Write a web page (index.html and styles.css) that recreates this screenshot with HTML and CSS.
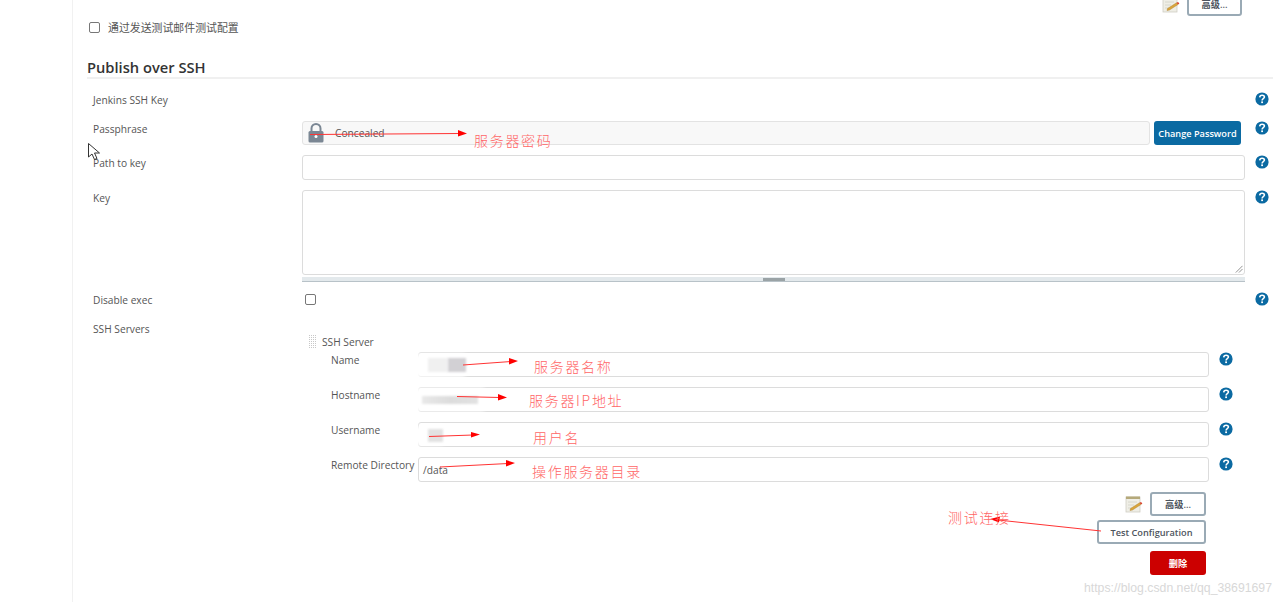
FILE: index.html
```html
<!DOCTYPE html>
<html lang="zh">
<head>
<meta charset="utf-8">
<title>Publish over SSH</title>
<link rel="stylesheet" href="styles.css">
</head>
<body>
<svg width="0" height="0" class="defs">
  <symbol id="help" viewBox="0 0 14 14">
    <circle cx="7" cy="7" r="6.6" fill="#0b6aa2"/>
    <path d="M4.700 5.400C4.800 3.900 5.800 3.200 7.100 3.200C8.500 3.200 9.400 4 9.400 5.100C9.400 6.600 7.100 6.700 7.100 8.400" fill="none" stroke="#fff" stroke-width="1.600"/>
    <rect x="6.200" y="9.400" width="1.800" height="1.700" fill="#fff"/>
  </symbol>
  <symbol id="notepad" viewBox="0 0 18 18">
    <rect x="1" y="2" width="14" height="15" fill="#efeee6" stroke="#cfcec4" stroke-width=".8"/>
    <rect x="1" y="1.500" width="14" height="2.500" fill="#b5a97a"/>
    <path d="M3 7h9M3 10h6M3 13h4" stroke="#d2d1c6" stroke-width=".8"/>
    <path d="M5.500 13.500L14.500 7.800L16 9.500L7.500 15L5 15.500Z" fill="#d9a53c" stroke="#a97b25" stroke-width=".4"/>
    <path d="M14.500 7.800L16 6.900L17.400 8.500L16 9.500Z" fill="#d8402c"/>
  </symbol>
</svg>
<div class="page">
  <aside class="side"></aside>
  <main class="main">
    <div class="topbar">
      <svg class="note"><use href="#notepad"/></svg>
      <button class="btn adv" type="button">高级...</button>
    </div>
    <label class="mailcheck"><input type="checkbox" class="check"><span>通过发送测试邮件测试配置</span></label>
    <h2 class="title">Publish over SSH</h2>

    <div class="row row-key">
      <div class="label">Jenkins SSH Key</div>
      <div class="field"></div>
      <svg class="help"><use href="#help"/></svg>
    </div>
    <div class="row">
      <div class="label">Passphrase</div>
      <div class="field pass">
        <div class="concealed">
          <svg class="lock" viewBox="0 0 16 20"><path d="M3.500 9V5.500a4.500 4.500 0 0 1 9 0V9" fill="none" stroke="#7b8794" stroke-width="2"/><rect x="0.500" y="8" width="15" height="11.500" rx="1.500" fill="#7b8794"/><circle cx="8" cy="13.500" r="1.500" fill="#fff"/></svg>
          <span>Concealed</span>
        </div>
        <button class="btn primary" type="button">Change Password</button>
      </div>
      <svg class="help"><use href="#help"/></svg>
    </div>
    <div class="row">
      <div class="label">Path to key</div>
      <div class="field"><div class="input"></div></div>
      <svg class="help"><use href="#help"/></svg>
    </div>
    <div class="row row-area">
      <div class="label">Key</div>
      <div class="field">
        <div class="area"><svg class="grab" viewBox="0 0 10 10"><path d="M9.500 2L2 9.500M9.500 5.500L5.500 9.500" stroke="#888" fill="none"/></svg></div>
        <div class="handle"><i></i></div>
      </div>
      <svg class="help"><use href="#help"/></svg>
    </div>
    <div class="row row-exec">
      <div class="label">Disable exec</div>
      <div class="field"><input type="checkbox" class="check exec"></div>
      <svg class="help"><use href="#help"/></svg>
    </div>
    <div class="row">
      <div class="label">SSH Servers</div>
      <div class="field servers">
        <div class="server-head"><span class="grip"></span><span>SSH Server</span></div>
        <div class="srow">
          <div class="slabel">Name</div>
          <div class="input sinput"><span class="patch p1"></span><span class="smudge s1"></span><span class="smudge s1b"></span></div>
          <svg class="help"><use href="#help"/></svg>
        </div>
        <div class="srow">
          <div class="slabel">Hostname</div>
          <div class="input sinput"><span class="patch p2"></span><span class="smudge s2"></span></div>
          <svg class="help"><use href="#help"/></svg>
        </div>
        <div class="srow">
          <div class="slabel">Username</div>
          <div class="input sinput"><span class="patch p3"></span><span class="smudge s3"></span></div>
          <svg class="help"><use href="#help"/></svg>
        </div>
        <div class="srow">
          <div class="slabel">Remote Directory</div>
          <div class="input sinput">/data</div>
          <svg class="help"><use href="#help"/></svg>
        </div>
        <div class="actions">
          <div class="act-line">
            <svg class="note"><use href="#notepad"/></svg>
            <button class="btn adv" type="button">高级...</button>
          </div>
          <button class="btn test" type="button">Test Configuration</button>
          <button class="btn danger" type="button">删除</button>
        </div>
        <div class="next-grip"></div>
      </div>
    </div>
  </main>
</div>

<svg class="marks" viewBox="0 0 1280 602">
  <g stroke="#f33" stroke-width="1" fill="#f00">
    <path d="M310 134.500L460 133.500"/><path d="M458 130L467 133.500L458 136.500Z" stroke="none"/>
    <path d="M463 365L511 361.500"/><path d="M509 358L518 361L509 364.500Z" stroke="none"/>
    <path d="M457 396.500L500 397.500"/><path d="M498 394L507 397.500L498 400.500Z" stroke="none"/>
    <path d="M429 436.500L473 435"/><path d="M471 432L480 434.500L471 437.500Z" stroke="none"/>
    <path d="M440 467L508 463.500"/><path d="M506 460L515 463L506 466.500Z" stroke="none"/>
    <path d="M1101 531L998 520"/><path d="M1000 516.500L990 519L999 522.500Z" stroke="none"/>
  </g>
  <path d="M88.500 143.500V157L92 154L94.500 159.500L97 158.500L94.500 153H99.500Z" fill="#fff" stroke="#333" stroke-width="1"/>
</svg>
<span class="note-red n1">服务器密码</span>
<span class="note-red n2">服务器名称</span>
<span class="note-red n3">服务器IP地址</span>
<span class="note-red n4">用户名</span>
<span class="note-red n5">操作服务器目录</span>
<span class="note-red n6">测试连接</span>
<span class="watermark">https://blog.csdn.net/qq_38691697</span>
</body>
</html>
```
FILE: styles.css
```css
* { box-sizing: border-box; }
html, body { margin: 0; height: 602px; overflow: hidden; background: #fff; }
body {
  font-family: "Open Sans", "Noto Sans CJK SC", sans-serif;
  font-size: 10.200px;
  color: #555;
}
.defs { position: absolute; }
.page { display: flex; height: 602px; }
.side { width: 73px; flex: none; border-right: 1px solid #f1f1f1; }
.main { flex: 1; padding: 0 7px 0 14px; }

.topbar {
  display: flex; justify-content: flex-end; align-items: flex-end; gap: 7px;
  height: 24px; margin: -8px 31px 0 0;
}
.topbar .note { margin-bottom: 3px; }

.note { width: 18px; height: 18px; flex: none; }
.btn {
  font: 600 9.200px "Open Sans", "Noto Sans CJK SC", sans-serif;
  border-radius: 3px; padding: 0; background: #fff; color: #4d545d;
  border: 2px solid #9aaab5; height: 24px;
}
.adv { width: 56px; }
.topbar .adv { width: 55px; }
.primary { width: 87px; background: #0b6aa2; border: 0; color: #fff; height: 24px; flex: none; }
.test { width: 109px; }
.danger { width: 56px; background: #cc0000; border: 0; color: #fff; height: 24px; }

.mailcheck { display: flex; align-items: center; gap: 8px; height: 12px; margin: 5px 0 0 2px; font-size: 10.900px; }
.check { appearance: none; margin: 0; width: 11px; height: 11px; border: 1px solid #777; border-radius: 2px; background: #fff; flex: none; }
.title {
  font-size: 14.700px; font-weight: 600; color: #333; margin: 23px 0 0;
  height: 23px; line-height: 22px; border-bottom: 2px solid #f0f0f0;
  width: 1186px;
}

.row { display: grid; grid-template-columns: 215px 943px 14px; column-gap: 0; margin-bottom: 10px; }
.row > .help { margin-left: 10px; }
.label { padding-left: 6px; line-height: 16px; color: #555; }
.help { width: 14px; height: 14px; display: block; flex: none; }
.row-key { padding-top: 13px; height: 32px; }
.pass { display: flex; gap: 4px; height: 24px; width: 939px; }
.concealed {
  flex: 1; display: flex; align-items: center; background: #f8f8f8;
  border: 1px solid #e3e3e3; border-radius: 3px; padding-left: 5px; gap: 11px;
}
.lock { width: 16px; height: 20px; flex: none; }
.input {
  height: 25px; border: 1px solid #dcdcdc; border-radius: 3px; background: #fff;
  padding: 0 4px; line-height: 24px; position: relative;
}
.row-area { margin-bottom: 10px; }
.area { height: 85px; border: 1px solid #dcdcdc; border-radius: 3px; position: relative; }
.grab { position: absolute; right: 1px; bottom: 1px; width: 9px; height: 9px; }
.handle {
  height: 5px; margin-top: 2px; background: #e3e9ec; border-bottom: 1px solid #b8c2c8;
  display: flex; justify-content: center; align-items: center;
}
.handle i { display: block; width: 22px; height: 3px; background: #9aa3a6; }
.row-exec { height: 19px; }
.exec { margin: 2px 0 0 3px; display: block; }

.servers { min-width: 0; }
.server-head { display: flex; align-items: center; gap: 6px; height: 15px; margin: 13px 0 3px 6px; }
.grip, .next-grip {
  width: 8px; display: block;
  background-color: #c8c8c8;
  background-image: linear-gradient(#fff 1px, transparent 1px), linear-gradient(90deg, #fff 1px, transparent 1px);
  background-size: 2px 2px;
}
.grip { height: 15px; }
.next-grip { height: 2px; margin: 26px 0 0 6px; }
.srow { display: grid; grid-template-columns: 116px 791px 14px; column-gap: 0; margin-bottom: 10px; width: 931px; }
.srow > .help { margin-left: 10px; }
.slabel { padding-left: 29px; line-height: 16px; white-space: nowrap; }
.patch { position: absolute; display: block; background: #fff; filter: blur(2px); }
.smudge { position: absolute; display: block; filter: blur(1px); }
.p1 { left: -6px; top: 1px; width: 52px; height: 23px; }
.s1 { left: 9px; top: 5px; width: 20px; height: 14px; background: #f0f0f0; }
.s1b { left: 29px; top: 5px; width: 18px; height: 14px; background: #d2d0d4; }
.p2 { left: -7px; top: 0; width: 72px; height: 23px; }
.s2 { left: 3px; top: 8px; width: 56px; height: 8px; background: linear-gradient(90deg, #e9e9e9, #dcdcdc 50%, #e2e2e2); }
.p3 { left: -6px; top: 3px; width: 30px; height: 19px; }
.s3 { left: 9px; top: 6px; width: 15px; height: 13px; background: #e2e2e2; }

.actions { display: flex; flex-direction: column; align-items: flex-end; gap: 4px; width: 904px; }
.act-line { display: flex; align-items: center; gap: 7px; }
.danger { margin-top: 3px; }

.marks { position: absolute; left: 0; top: 0; width: 1280px; height: 602px; pointer-events: none; }
.note-red {
  position: absolute; color: #f66; font-family: "Noto Sans CJK SC", sans-serif;
  font-size: 14px; font-weight: 300; letter-spacing: 1.700px; line-height: 18px; white-space: nowrap;
}
.n1 { left: 474px; top: 131px; }
.n2 { left: 534px; top: 357px; }
.n3 { left: 529px; top: 391px; }
.n4 { left: 533px; top: 428px; }
.n5 { left: 532px; top: 462px; }
.n6 { left: 948px; top: 508px; }
.watermark {
  position: absolute; left: 1084px; top: 581px; color: #d8d8d8;
  font: 12.250px "Liberation Sans", sans-serif; white-space: nowrap;
}
```
